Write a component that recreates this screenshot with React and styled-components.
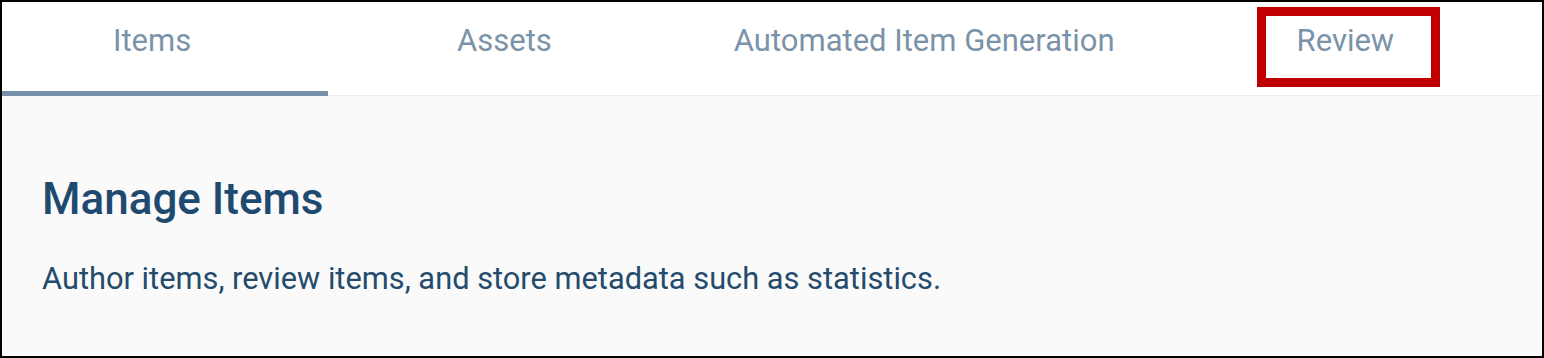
import React from "react";
import styled, { createGlobalStyle } from "styled-components";

const GlobalStyle = createGlobalStyle`
  body {
    margin: 0;
    font-family: Roboto, "Liberation Sans", sans-serif;
    background: #ffffff;
  }
`;

const tabs = [
  { label: "Items", active: true },
  { label: "Assets" },
  { label: "Automated Item Generation" },
  { label: "Review", highlighted: true },
];

function App() {
  return (
    <>
      <GlobalStyle />
      <Frame>
        <TabBar>
          {tabs.map((tab, i) => (
            <Tab key={tab.label} $active={tab.active} $first={i === 0}>
              <TabLabel>{tab.label}</TabLabel>
              {tab.highlighted && <Highlight />}
            </Tab>
          ))}
        </TabBar>
        <Content>
          <Heading>Manage Items</Heading>
          <Description>
            Author items, review items, and store metadata such as statistics.
          </Description>
        </Content>
      </Frame>
    </>
  );
}

export default App;

const Frame = styled.div`
  width: 1544px;
  height: 358px;
  box-sizing: border-box;
  border: 2px solid #000;
  display: flex;
  flex-direction: column;
  background: #fafafa;
  overflow: hidden;
`;

const TabBar = styled.nav`
  display: flex;
  height: 93px;
  flex-shrink: 0;
  background: #fff;
  border-bottom: 1px solid #ededed;
`;

const Tab = styled.div`
  position: relative;
  display: flex;
  align-items: flex-start;
  padding: 21px 53px 0 129px;
  ${(p) => p.$first && `width: 326px; padding-left: 111px; padding-right: 0; box-sizing: border-box;`}

  &::after {
    content: "";
    display: ${(p) => (p.$active ? "block" : "none")};
    position: absolute;
    left: 0;
    right: 0;
    bottom: -1px;
    height: 5px;
    background: #7590a8;
  }
`;

const TabLabel = styled.span`
  font-size: 31px;
  line-height: 36px;
  color: #7b93a9;
  white-space: nowrap;
`;

const Highlight = styled.span`
  position: absolute;
  left: 89px;
  top: 5px;
  width: 183px;
  height: 80px;
  box-sizing: border-box;
  border: 9px solid #c00000;
  pointer-events: none;
`;

const Content = styled.section`
  padding: 77px 40px 0;
  display: flex;
  flex-direction: column;
  gap: 36px;
`;

const Heading = styled.h1`
  margin: 0;
  font-size: 44px;
  line-height: 52px;
  font-weight: 500;
  color: #1e4a6f;
`;

const Description = styled.p`
  margin: 0;
  font-size: 30.8px;
  line-height: 36px;
  font-weight: 400;
  color: #244b6c;
`;
